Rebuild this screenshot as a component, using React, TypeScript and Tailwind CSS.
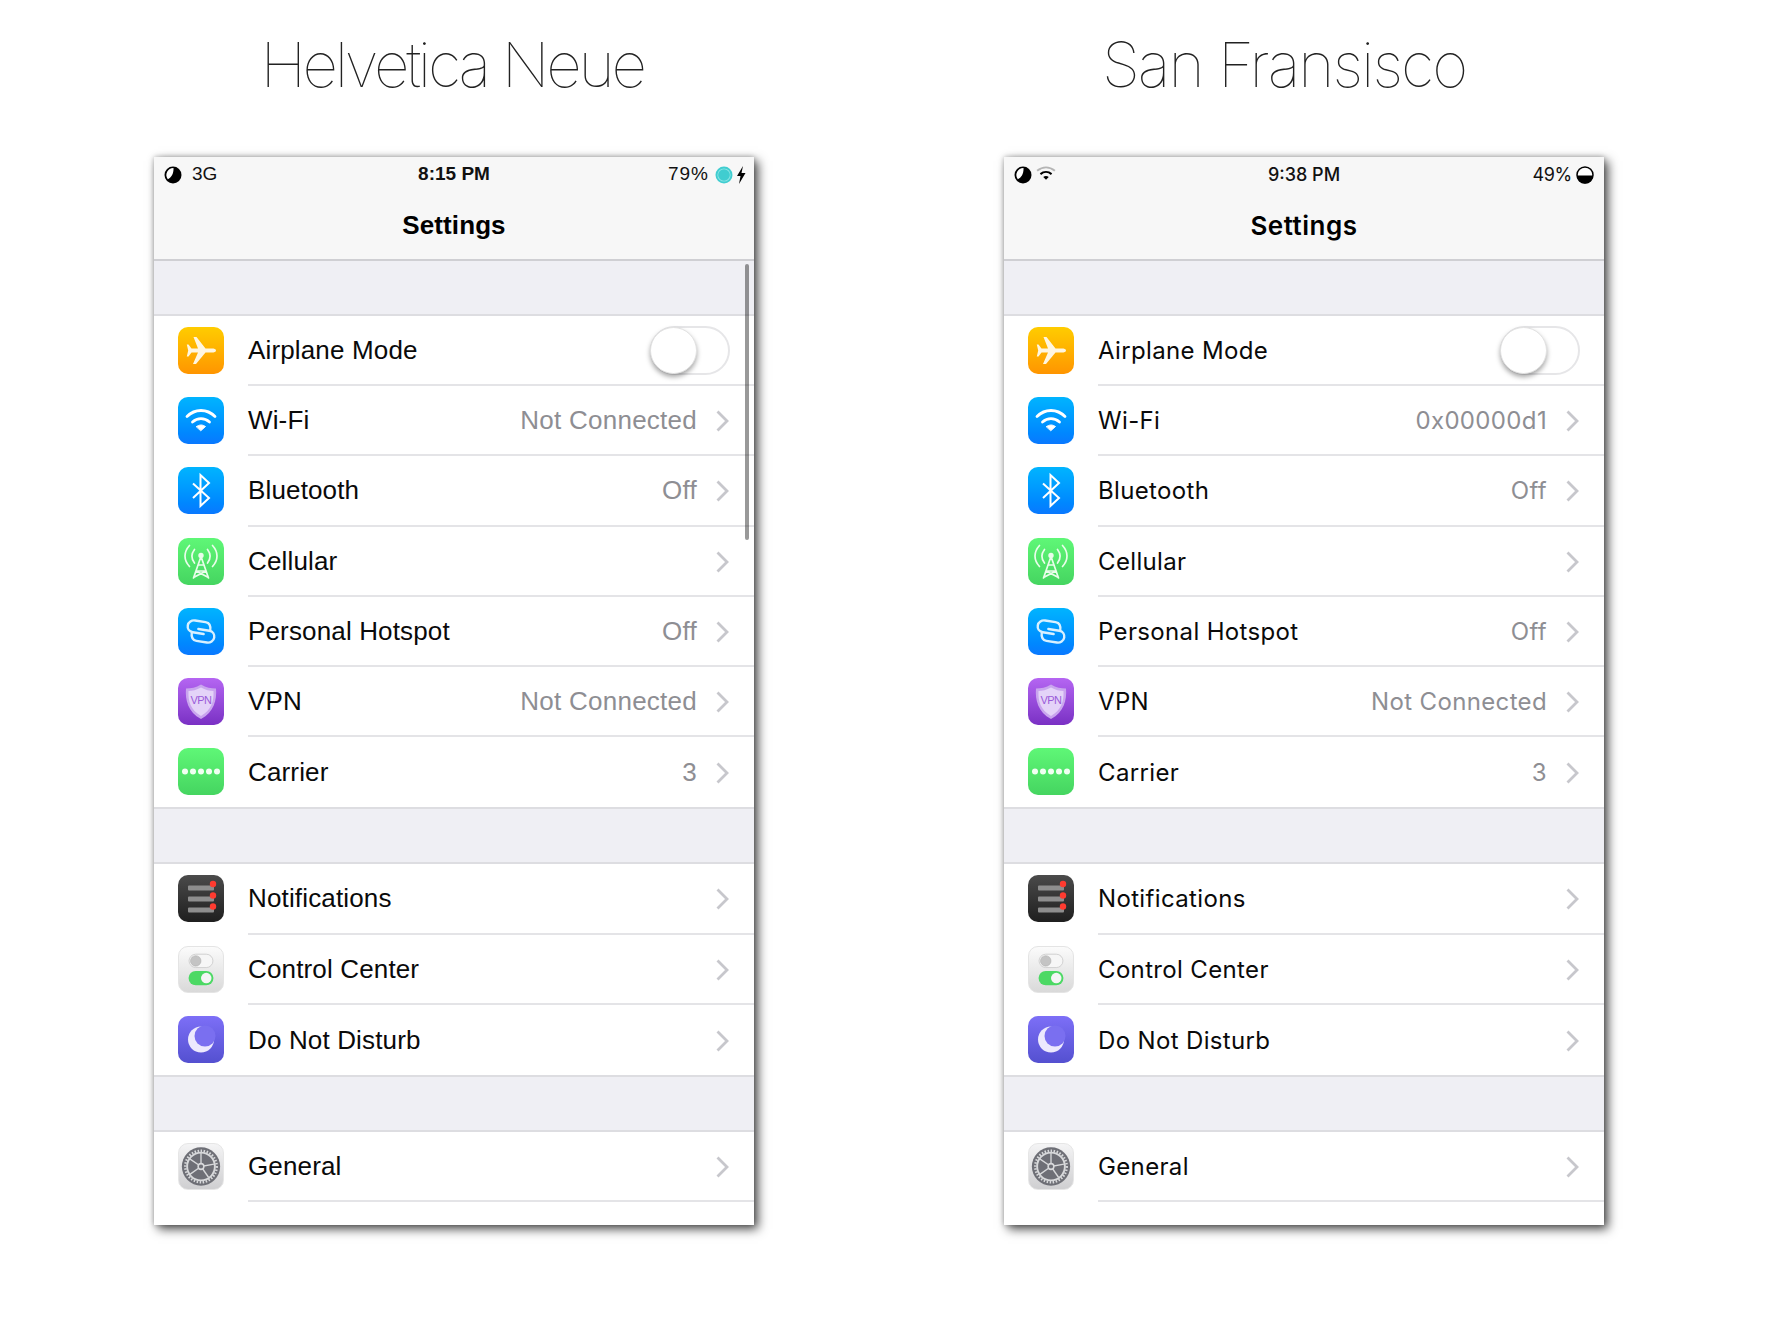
import React from 'react';

const AirplaneIcon = () => (
  <svg viewBox="0 0 46 47" className="w-full h-full">
    <path d="M38 23.5C38 22 36 21.5 34 21.5H27.5L18.5 10H15.5L20 21.5H13.5L10.5 17.5H8.8L10.2 23.5L8.8 29.5H10.5L13.5 25.5H20L15 37H18L27.5 25.5H34C36 25.5 38 25 38 23.5Z" fill="#fff6e0" />
  </svg>
);

const WifiIcon = () => (
  <svg viewBox="0 0 46 47" className="w-full h-full" fill="none" stroke="#fff" strokeWidth="2.8" strokeLinecap="round">
    <path d="M9 19.5C17 11.5 29 11.5 37 19.5" />
    <path d="M14.5 25C19.5 20.5 26.5 20.5 31.5 25" />
    <path d="M18.5 29.5C21.5 27.5 24.5 27.5 27.5 29.5L23 33.5Z" fill="#fff" stroke="#fff" strokeWidth="1" strokeLinejoin="round" />
  </svg>
);

const BluetoothIcon = () => (
  <svg viewBox="0 0 46 47" className="w-full h-full" fill="none" stroke="#fff" strokeWidth="2">
    <path d="M15 16.5L31 31L22.5 39V8L31 16L15 31" />
  </svg>
);

const CellularIcon = () => (
  <svg viewBox="0 0 46 47" className="w-full h-full" fill="none" stroke="#e9fdea" strokeWidth="1.7" strokeLinecap="round">
    <path d="M11.5 7.5C5.5 14 5.5 22 11.5 28.5" />
    <path d="M34.5 7.5C40.5 14 40.5 22 34.5 28.5" />
    <path d="M16.5 11.5C13 16 13 20.5 16.5 25" />
    <path d="M29.5 11.5C33 16 33 20.5 29.5 25" />
    <circle cx="23" cy="17.5" r="2.7" fill="#e9fdea" stroke="none" />
    <path d="M23 18.5L15.5 40M23 18.5L30.5 40M20 27H26M18 33H28M18 33L29.5 39M28 33L16.5 39" />
  </svg>
);

const HotspotIcon = () => (
  <svg viewBox="0 0 46 47" className="w-full h-full" fill="none" stroke="#d8f0ff" strokeWidth="2.4" strokeLinecap="round">
    <g transform="rotate(9 23 23.5)">
      <path d="M26 25.5H15C11 25.5 9 22.5 9 19.5C9 16 12 13.5 15.5 13.5H26C29.5 13.5 32 16 32 21.5" />
      <path d="M20 21.5H31C35 21.5 37 24.5 37 27.5C37 31 34 33.5 30.5 33.5H20C16.5 33.5 14 31 14 25.5" />
    </g>
  </svg>
);

const VpnIcon = () => (
  <div className="relative w-full h-full">
    <svg viewBox="0 0 46 47" className="w-full h-full">
      <path d="M23 6.5C28 9.5 33 10.5 38 10.5C39 22 36 34 23 41C10 34 7 22 8 10.5C13 10.5 18 9.5 23 6.5Z" fill="#c9a5ee" />
      <path d="M23 9.5C27.5 12 31.5 13 35.5 13C36 23 33.5 32 23 38C12.5 32 10 23 10.5 13C14.5 13 18.5 12 23 9.5Z" fill="#e4d3f8" />
    </svg>
    <span className="absolute inset-0 flex items-center justify-center pb-0.5 text-[11px] tracking-[-0.5px] text-[#9a5ad8] font-['Liberation_Sans',sans-serif]">VPN</span>
  </div>
);

const CarrierIcon = () => (
  <svg viewBox="0 0 46 47" className="w-full h-full" fill="#f0fff2">
    <circle cx="7" cy="23.5" r="3" />
    <circle cx="15" cy="23.5" r="3" />
    <circle cx="23" cy="23.5" r="3" />
    <circle cx="31" cy="23.5" r="3" />
    <circle cx="39" cy="23.5" r="3" />
  </svg>
);

const NotificationsIcon = () => (
  <svg viewBox="0 0 46 47" className="w-full h-full">
    <rect x="10" y="10.5" width="26" height="5" rx="1" fill="#8e8e8e" />
    <rect x="10" y="21.5" width="26" height="5" rx="1" fill="#8e8e8e" />
    <rect x="10" y="32.5" width="26" height="5" rx="1" fill="#8e8e8e" />
    <circle cx="35" cy="9" r="3.2" fill="#ff3b30" />
    <circle cx="35" cy="20.5" r="3.2" fill="#ff3b30" />
    <circle cx="35" cy="31.5" r="3.2" fill="#ff3b30" />
  </svg>
);

const ControlCenterIcon = () => (
  <svg viewBox="0 0 46 47" className="w-full h-full">
    <rect x="10.5" y="7.5" width="25" height="14" rx="7" fill="#f6f6f6" stroke="#cfcfcf" />
    <circle cx="17.5" cy="14.5" r="5.5" fill="#c4c4c4" stroke="#a9a9a9" strokeWidth="0.5" />
    <rect x="10" y="25" width="26" height="15" rx="7.5" fill="#4cd964" />
    <circle cx="28.5" cy="32.5" r="5.5" fill="#f5f5f5" />
  </svg>
);

const MoonIcon = () => (
  <svg viewBox="0 0 46 47" className="w-full h-full">
    <circle cx="23" cy="23.5" r="13" fill="#ece9fd" />
    <circle cx="27" cy="20" r="10.5" fill="#7a6ff0" />
  </svg>
);

const GearIcon = () => (
  <svg viewBox="0 0 46 47" className="w-full h-full" fill="none">
    <circle cx="23" cy="23.5" r="20" fill="#6e6f76" />
    <circle cx="23" cy="23.5" r="14.5" stroke="#d7d8da" strokeWidth="2" />
    <circle cx="23" cy="23.5" r="16.5" stroke="#d7d8da" strokeWidth="2.5" strokeDasharray="1.6 1.6" />
    <path d="M23 23.5L23 9.5M23 23.5L36.5 21M23 23.5L31 35M23 23.5L11 32M23 23.5L10.5 15" stroke="#d7d8da" strokeWidth="1.4" />
    <circle cx="23" cy="23.5" r="3" fill="#6e6f76" stroke="#d7d8da" strokeWidth="1.6" />
  </svg>
);

const Chevron = () => (
  <svg viewBox="0 0 13 22" className="w-[13px] h-[22px] shrink-0 mt-0.5" fill="none" stroke="#c7c7cc" strokeWidth="2.8">
    <path d="M1.5 1.5L11 11L1.5 20.5" />
  </svg>
);

const Toggle = () => (
  <div className="relative w-20 h-[49px] mr-[-1px] rounded-full border-2 border-[#e6e6e8] bg-white">
    <div className="absolute -left-0.5 -top-px w-[47px] h-[47px] rounded-full bg-white border border-[#e2e2e2] shadow-[0_3px_5px_rgba(0,0,0,0.35)]" />
  </div>
);

const MoonStatus = () => (
  <svg viewBox="0 0 18 18" className="w-[18px] h-[18px] ml-0.5">
    <circle cx="9" cy="9" r="8.5" fill="#000" />
    <path d="M9.5 2A7 7 0 0 0 3.8 13.2C7.5 11.5 9.8 7.5 9.5 2Z" fill="#fff" />
  </svg>
);

type RowData = {
  label: string;
  detail?: string;
  icon: React.ReactNode;
  bg: string;
  toggle?: boolean;
  last?: boolean;
};

const Row = ({ label, detail, icon, bg, toggle, last, font, detailFont }: RowData & { font: string; detailFont: string }) => (
  <div className="flex items-center h-[70.2px] pl-6 bg-white">
    <div className={`w-[46px] h-[47px] mb-px rounded-[10px] overflow-hidden shrink-0 ${bg}`}>{icon}</div>
    <div className={`flex flex-1 items-center h-full ml-6 pr-[25px] ${last ? '' : 'border-b-2 border-[#e4e4e7]'}`}>
      <span className={`flex-1 text-[#0a0a0a] ${font}`}>{label}</span>
      {detail && <span className={`mr-[19px] text-[#8e8e93] ${detailFont}`}>{detail}</span>}
      {toggle ? <Toggle /> : <Chevron />}
    </div>
  </div>
);

const blue = 'bg-gradient-to-b from-[#00b4ff] to-[#0a78ff]';
const green = 'bg-gradient-to-b from-[#5ff777] to-[#45d560]';

const Spacer = () => (
  <div className="h-[57px] bg-[#efeff4] border-y-2 border-[#dddde1]" />
);

type PhoneProps = {
  font: string;
  rowFont: string;
  detailFont: string;
  statusFont: string;
  batteryFont: string;
  timeFont: string;
  titleFont: string;
  wifi: string;
  time: string;
  battery: string;
  left: React.ReactNode;
  right: React.ReactNode;
  scrollbar?: boolean;
};

const Phone = ({ font, rowFont, detailFont, statusFont, batteryFont, timeFont, titleFont, wifi, time, battery, left, right, scrollbar }: PhoneProps) => (
  <div className={`relative w-[600px] h-[1068px] bg-white shadow-[4px_4px_10px_rgba(0,0,0,0.7),0_0_5px_rgba(0,0,0,0.25)] ${font}`}>
    <div className="h-[104px] bg-[#f7f7f7] border-b-2 border-[#cfcfd3] px-2">
      <div className={`flex items-center h-[33px] pt-0.5 text-[#111] ${statusFont}`}>
        <div className="flex flex-1 items-center">{left}</div>
        <span className={timeFont}>{time}</span>
        <div className="flex flex-1 items-center justify-end">
          <span className={batteryFont}>{battery}</span>
          {right}
        </div>
      </div>
      <div className={`mt-[16px] text-center text-black ${titleFont}`}>Settings</div>
    </div>
    <div className="h-[55px] bg-[#efeff4] border-b-2 border-[#dddde1]" />
    <Row font={rowFont} detailFont={detailFont} label="Airplane Mode" toggle icon={<AirplaneIcon />} bg="bg-gradient-to-b from-[#ffcc00] to-[#ff9500]" />
    <Row font={rowFont} detailFont={detailFont} label="Wi-Fi" detail={wifi} icon={<WifiIcon />} bg={blue} />
    <Row font={rowFont} detailFont={detailFont} label="Bluetooth" detail="Off" icon={<BluetoothIcon />} bg={blue} />
    <Row font={rowFont} detailFont={detailFont} label="Cellular" icon={<CellularIcon />} bg={green} />
    <Row font={rowFont} detailFont={detailFont} label="Personal Hotspot" detail="Off" icon={<HotspotIcon />} bg={blue} />
    <Row font={rowFont} detailFont={detailFont} label="VPN" detail="Not Connected" icon={<VpnIcon />} bg="bg-gradient-to-b from-[#b565f2] to-[#7a30c4]" />
    <Row font={rowFont} detailFont={detailFont} label="Carrier" detail="3" last icon={<CarrierIcon />} bg={green} />
    <Spacer />
    <Row font={rowFont} detailFont={detailFont} label="Notifications" icon={<NotificationsIcon />} bg="bg-gradient-to-b from-[#4b4b4b] to-[#1f1f1f]" />
    <Row font={rowFont} detailFont={detailFont} label="Control Center" icon={<ControlCenterIcon />} bg="bg-gradient-to-b from-[#fbfbfb] to-[#d9d9d9] border border-[#e4e4e4]" />
    <Row font={rowFont} detailFont={detailFont} label="Do Not Disturb" last icon={<MoonIcon />} bg="bg-gradient-to-b from-[#7d6ff7] to-[#5450d0]" />
    <Spacer />
    <Row font={rowFont} detailFont={detailFont} label="General" icon={<GearIcon />} bg="bg-gradient-to-b from-[#f4f4f5] to-[#cfcfd1] border border-[#e6e6e6]" />
    {scrollbar && <div className="absolute right-[5px] top-[107px] w-1 h-[276px] rounded-full bg-black/40" />}
  </div>
);

export default function App() {
  return (
    <div className="w-[1786px] h-[1317px] bg-white pl-[154px] flex gap-[250px]">
      <div className="flex flex-col w-[600px]">
        <h1 className="h-[157px] pt-[23px] pr-[4px] text-center text-[62px] leading-[84px] font-thin tracking-[-3.3px] text-[#222] font-['Inter',sans-serif]">
          Helvetica Neue
        </h1>
        <Phone
          font="font-['Liberation_Sans',sans-serif]"
          rowFont="text-[26px] tracking-[0.15px] pt-px"
          detailFont="text-[26px] tracking-[0.25px] pt-px"
          statusFont="text-[19px]"
          batteryFont="tracking-[1px]"
          timeFont="font-bold"
          titleFont="text-[26px] font-bold tracking-[0.1px]"
          wifi="Not Connected"
          time="8:15 PM"
          battery="79%"
          scrollbar
          left={
            <>
              <MoonStatus />
              <span className="ml-[10px]">3G</span>
            </>
          }
          right={
            <>
              <svg viewBox="0 0 18 18" className="w-[18px] h-[18px] ml-1.5">
                <circle cx="9" cy="9" r="8.5" fill="#40cdd0" />
                <circle cx="9" cy="9" r="6.6" fill="#8ee6e6" />
                <circle cx="9" cy="9" r="5.8" fill="#40cdd0" />
              </svg>
              <svg viewBox="0 0 10 18" className="w-2.5 h-[18px] ml-[3px]">
                <path d="M7 0L1 10H4.5L3 18L9.5 7H5.5Z" fill="#000" />
              </svg>
            </>
          }
        />
      </div>
      <div className="flex flex-col w-[600px]">
        <h1 className="h-[157px] pt-[23px] pr-10 text-center text-[62px] leading-[84px] font-thin tracking-[-2px] text-[#222] font-['Inter',sans-serif]">
          San Fransisco
        </h1>
        <Phone
          font="font-['Inter',sans-serif]"
          rowFont="text-[24px] tracking-[0.35px] pt-0.5"
          detailFont="text-[24px] tracking-[0.35px] pt-0.5"
          statusFont="text-[18px]"
          batteryFont="tracking-[-0.3px]"
          timeFont="font-medium"
          titleFont="text-[26px] font-semibold tracking-[0.5px]"
          wifi="0x00000d1"
          time="9:38 PM"
          battery="49%"
          left={
            <>
              <MoonStatus />
              <svg viewBox="0 0 18 14" className="w-5 h-4 ml-1 mb-1" fill="none" strokeWidth="1.8">
                <path d="M1 5C6 1 12 1 17 5" stroke="#b5b5b5" />
                <path d="M4 8C7 5.5 11 5.5 14 8" stroke="#000" />
                <path d="M6.5 10.5C8 9.5 10 9.5 11.5 10.5L9 13Z" fill="#000" stroke="none" />
              </svg>
            </>
          }
          right={
            <svg viewBox="0 0 18 18" className="w-[18px] h-[18px] ml-1 mr-[2px]">
              <circle cx="9" cy="9" r="8" fill="#fff" stroke="#000" strokeWidth="1.5" />
              <path d="M1 9.5H17A8 8 0 0 1 1 9.5Z" fill="#000" />
            </svg>
          }
        />
      </div>
    </div>
  );
}
